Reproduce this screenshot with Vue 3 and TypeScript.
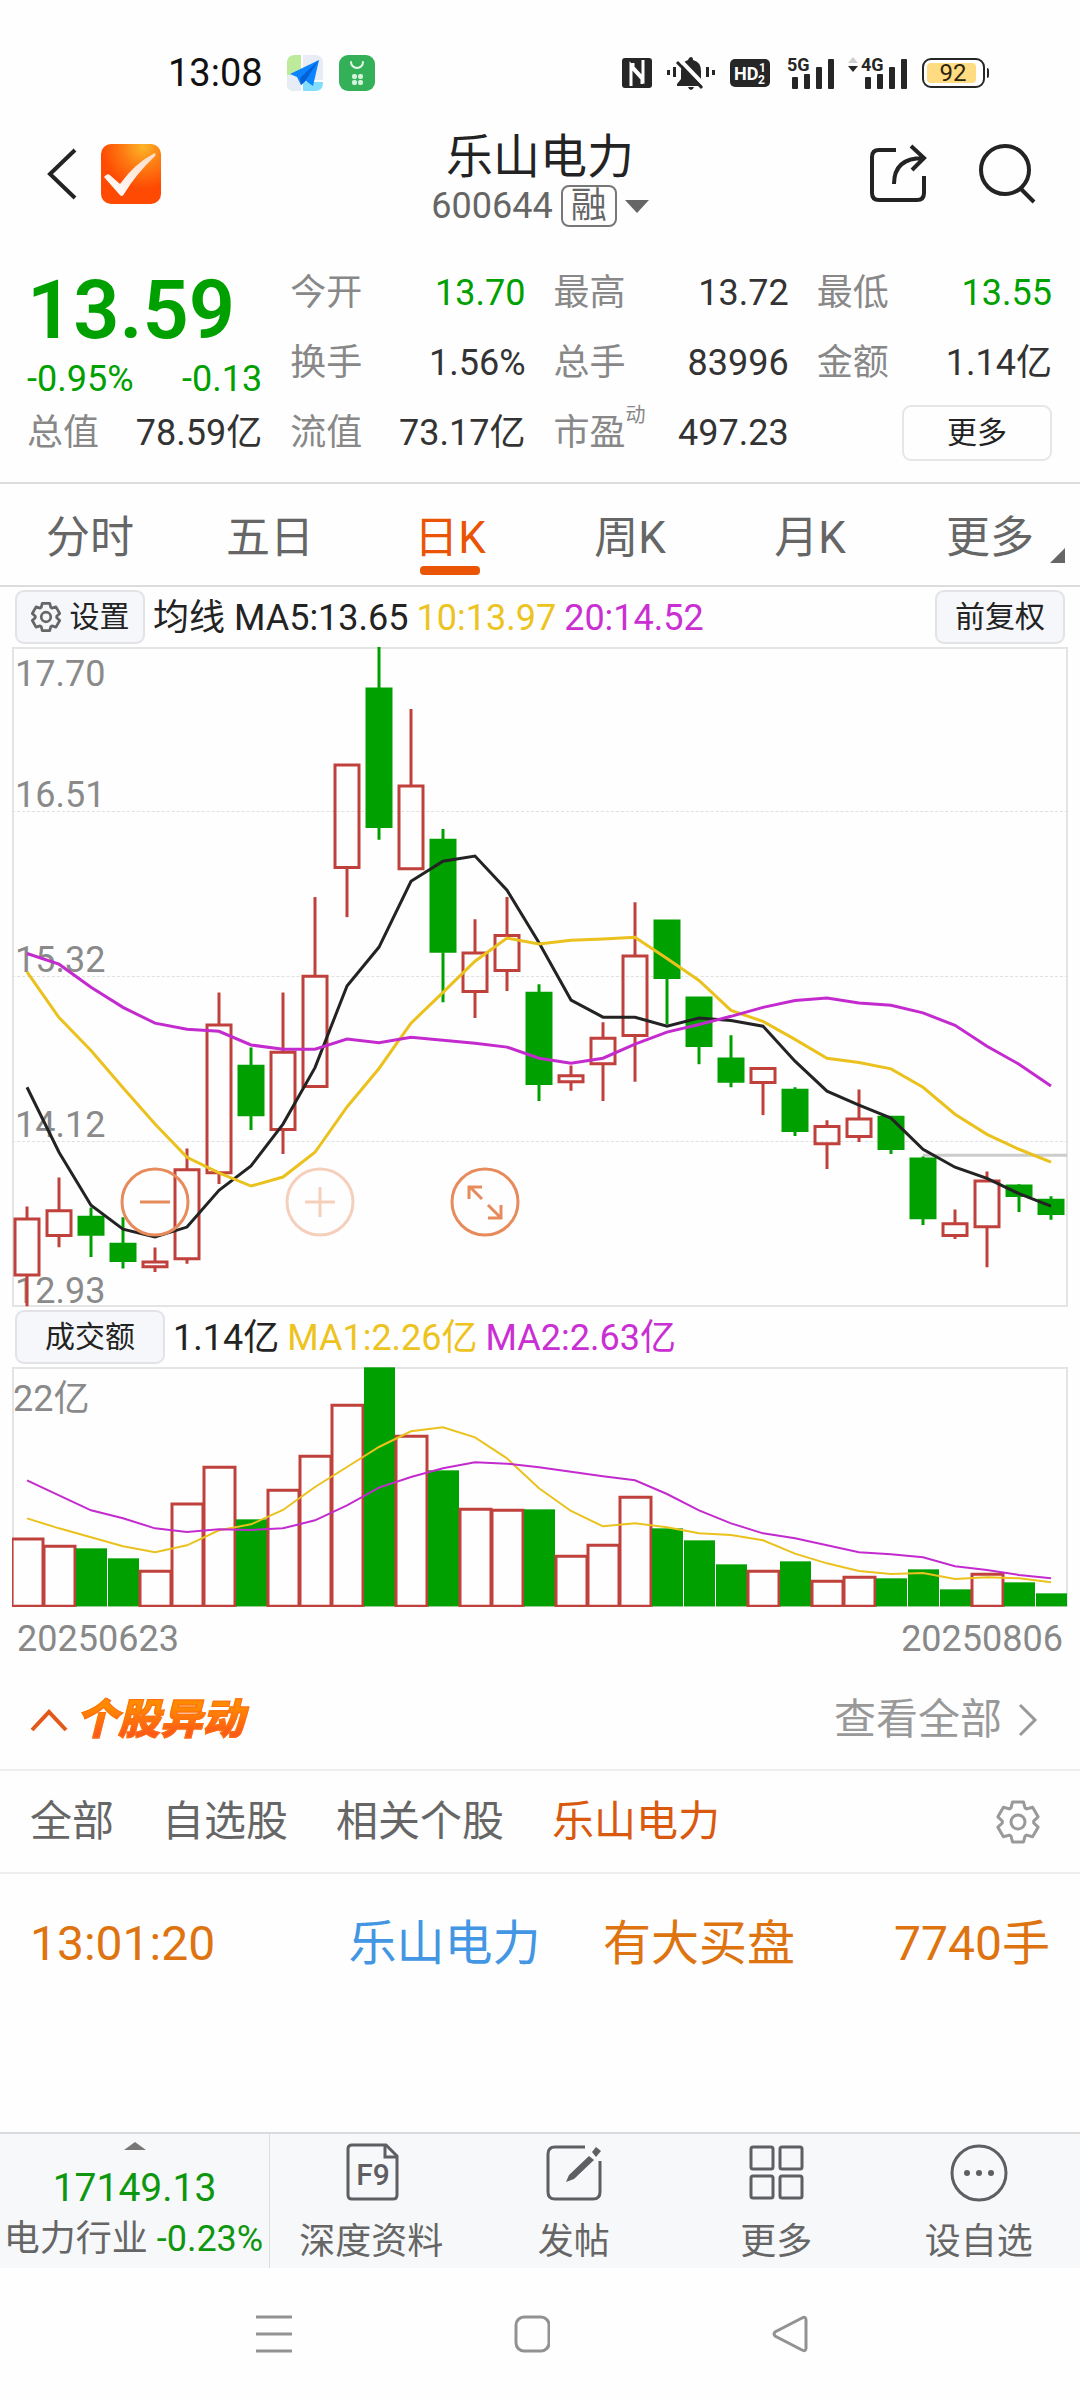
<script setup lang="ts">
import { computed, ref } from 'vue'

interface Quote {
  label: string
  value: string
  down?: boolean
  note?: string
}

type Candle = [high: number, top: number, bottom: number, low: number, up: 0 | 1]

const quotes: Quote[] = [
  { label: '今开', value: '13.70', down: true },
  { label: '最高', value: '13.72' },
  { label: '最低', value: '13.55', down: true },
  { label: '换手', value: '1.56%' },
  { label: '总手', value: '83996' },
  { label: '金额', value: '1.14亿' },
  { label: '总值', value: '78.59亿' },
  { label: '流值', value: '73.17亿' },
  { label: '市盈', value: '497.23', note: '动' },
]

const periods = ['分时', '五日', '日K', '周K', '月K', '更多']
const period = ref('日K')

const feeds = ['全部', '自选股', '相关个股', '乐山电力']
const feed = ref('乐山电力')

const candles: Candle[] = [
  [1325, 1352, 1487, 1558, 1], [1257, 1333, 1395, 1420, 1], [1327, 1348, 1392, 1443, 0],
  [1350, 1411, 1453, 1470, 0], [1421, 1453, 1468, 1478, 1], [1189, 1237, 1449, 1459, 1],
  [824, 898, 1248, 1272, 1], [953, 995, 1112, 1146, 0], [824, 962, 1147, 1202, 1],
  [601, 784, 1046, 1046, 1], [290, 290, 534, 648, 1], [16, 112, 438, 467, 0],
  [161, 339, 537, 537, 1], [442, 466, 730, 847, 0], [653, 730, 824, 884, 1],
  [601, 689, 775, 821, 1], [805, 824, 1039, 1078, 0], [995, 1017, 1035, 1054, 1],
  [894, 929, 993, 1078, 1], [613, 737, 927, 1033, 1], [655, 655, 791, 899, 0],
  [835, 835, 950, 992, 0], [924, 978, 1034, 1046, 0], [1000, 1000, 1037, 1111, 1],
  [1046, 1051, 1149, 1160, 0], [1123, 1136, 1180, 1237, 1], [1051, 1118, 1163, 1174, 1],
  [1114, 1114, 1191, 1202, 0], [1208, 1212, 1353, 1368, 0], [1332, 1363, 1395, 1401, 1],
  [1243, 1263, 1374, 1467, 1], [1273, 1275, 1301, 1338, 0], [1301, 1308, 1343, 1356, 0],
]

const volumeTops = [
  716, 738, 744, 774, 813, 611, 501, 657, 570, 468, 315, 201, 408, 510, 627, 630, 627,
  768, 735, 591, 684, 720, 792, 813, 783, 843, 831, 834, 807, 867, 822, 846, 879,
]
const VOLUME_BASE = 918

const priceLines = [
  { color: '#232323', ys: [1046, 1198, 1322, 1378, 1396, 1373, 1287, 1230, 1132, 1000, 809, 718, 564, 517, 505, 585, 708, 842, 882, 882, 903, 884, 890, 903, 985, 1055, 1088, 1118, 1191, 1233, 1259, 1295, 1324] },
  { color: '#eac11d', ys: [776, 883, 960, 1047, 1132, 1210, 1246, 1277, 1256, 1198, 1092, 1002, 896, 824, 751, 697, 711, 702, 699, 695, 745, 796, 866, 892, 934, 978, 988, 1003, 1046, 1109, 1156, 1191, 1221] },
  { color: '#c32bcf', ys: [733, 758, 812, 859, 896, 910, 915, 947, 957, 957, 933, 942, 929, 936, 943, 952, 978, 990, 978, 945, 917, 899, 880, 859, 843, 837, 849, 854, 872, 901, 950, 992, 1043] },
]
const volumeLines = [
  { color: '#eac11d', ys: [654, 684, 711, 738, 756, 735, 690, 672, 629, 560, 500, 440, 393, 381, 411, 474, 564, 632, 678, 669, 681, 699, 704, 720, 760, 789, 812, 821, 818, 836, 831, 834, 846] },
  { color: '#c32bcf', ys: [540, 585, 630, 654, 684, 695, 687, 689, 684, 660, 615, 562, 530, 504, 486, 490, 501, 514, 528, 540, 581, 630, 669, 699, 714, 735, 756, 762, 771, 798, 809, 824, 834] },
]

const STEP = 32
const center = (i: number) => 15 + STEP * i
const toPoints = (ys: number[]) => ys.map((y, i) => `${center(i)},${y}`).join(' ')

const volumes = computed(() =>
  volumeTops.map((top, i) => ({ top, x: STEP * i, up: candles[i][4] === 1 && i !== 29 })),
)

const gear =
  'M-7-14.1L-5.5-20H5.5L7-14.1 8.7-13.1 14.6-14.8 20.1-5.2 15.7-1V1L20.1 5.2 14.6 14.8 8.7 13.1 7 14.1 5.5 20H-5.5L-7 14.1-8.7 13.1-14.6 14.8-20.1 5.2-15.7 1V-1L-20.1-5.2-14.6-14.8-8.7-13.1Z'
</script>

<template>
  <div class="screen">
    <div class="status">
      <div class="status-side">
        <time class="clock">13:08</time>
        <svg width="36" height="36" viewBox="0 0 36 36" aria-hidden="true">
          <path d="M8 0H14V36H8Q0 36 0 28V8Q0 0 8 0Z" fill="#bdeb9b" />
          <path d="M0 20H14V36H8Q0 36 0 28Z" fill="#e6edf6" />
          <path d="M16 0H28Q36 0 36 8V25H16Z" fill="#e8edf5" />
          <path d="M16 27H36V28Q36 36 28 36H16Z" fill="#83defd" />
          <path d="M32 5L3 19L10 22L14 30L19 26L26 31Z" fill="#0a84ff" />
          <path d="M32 5L13 23L14 30L18 26Z" fill="#0560d6" />
        </svg>
        <svg width="36" height="36" viewBox="0 0 36 36" aria-hidden="true">
          <rect width="36" height="36" rx="9" fill="#34b158" />
          <path d="M12 7a6 6 0 0 0 12 0" fill="none" stroke="#e6f8ea" stroke-width="2" stroke-linecap="round" />
          <g fill="#d4f3db">
            <rect x="13" y="19" width="5" height="5" rx="2" /><rect x="19" y="19" width="5" height="5" rx="2" />
            <rect x="13" y="25" width="5" height="5" rx="2" /><rect x="19" y="25" width="5" height="5" rx="2" />
          </g>
        </svg>
      </div>
      <div class="status-icons">
        <svg width="30" height="30" viewBox="0 0 30 30" aria-hidden="true">
          <rect width="30" height="30" rx="3" fill="#262626" />
          <path d="M9 28V7L20 19V26M11 5V11L21 22V2" fill="none" stroke="#fff" stroke-width="3" />
        </svg>
        <svg width="50" height="34" viewBox="0 0 50 34" aria-hidden="true">
          <g fill="#262626">
            <path d="M25 1Q27 1 27 4Q35 6 35 15V23L38 28V30H11V28L15 23V15Q15 6 22 4Q23 1 25 1ZM22 31H28Q27 34 25 34Q23 34 22 31Z" />
            <rect x="1" y="14" width="3" height="5" /><rect x="7" y="11" width="3" height="10" />
            <rect x="40" y="11" width="3" height="10" /><rect x="46" y="14" width="3" height="5" />
          </g>
          <path d="M14 4L40 31" stroke="#fff" stroke-width="4" /><path d="M11 6L36 32" stroke="#262626" stroke-width="3" />
        </svg>
        <svg width="40" height="28" viewBox="0 0 40 28" aria-hidden="true">
          <rect width="40" height="28" rx="5" fill="#262626" />
          <g fill="#fff" font-family="Roboto, sans-serif" font-weight="700">
            <text x="4" y="21" font-size="18">HD</text>
            <text x="29" y="13" font-size="12">1</text><text x="28" y="25" font-size="12">2</text>
          </g>
        </svg>
        <svg width="50" height="40" viewBox="-3 -3 50 40" aria-hidden="true">
          <g fill="#262626">
            <text x="0" y="15" font-size="18" font-weight="700" font-family="Roboto, sans-serif">5G</text>
            <rect x="5" y="21" width="6" height="12" rx="1" /><rect x="17" y="18" width="6" height="15" rx="1" />
            <rect x="29" y="11" width="6" height="22" rx="1" /><rect x="41" y="3" width="6" height="30" rx="1" />
          </g>
        </svg>
        <svg width="60" height="40" viewBox="0 -3 60 40" aria-hidden="true">
          <path d="M0 7L5 1L10 7Z" fill="#d0d0d0" />
          <g fill="#262626">
            <path d="M0 10H10L5 16Z" />
            <text x="13" y="15" font-size="18" font-weight="700" font-family="Roboto, sans-serif">4G</text>
            <rect x="17" y="21" width="6" height="12" rx="1" /><rect x="29" y="18" width="6" height="15" rx="1" />
            <rect x="41" y="11" width="6" height="22" rx="1" /><rect x="53" y="3" width="6" height="30" rx="1" />
          </g>
        </svg>
        <svg width="68" height="32" viewBox="0 0 68 32" aria-hidden="true">
          <rect x="1" y="2" width="61" height="28" rx="8" fill="#fff" stroke="#262626" stroke-width="2" />
          <rect x="5" y="6" width="49" height="20" rx="4" fill="#ffdb82" />
          <path d="M65 11Q67 11 67 14V19Q67 21 65 21Z" fill="#262626" />
          <text x="31" y="24" text-anchor="middle" font-size="24" font-family="Roboto, sans-serif" fill="#2b2410">92</text>
        </svg>
      </div>
    </div>

    <header class="header">
      <div class="header-side header-back">
        <button type="button" aria-label="返回">
          <svg width="32" height="54" viewBox="0 0 32 54"><path d="M29 3L4 27L29 51" fill="none" stroke="#232323" stroke-width="4" /></svg>
        </button>
        <svg width="62" height="62" viewBox="0 0 62 62" aria-hidden="true">
          <defs>
            <radialGradient id="logo" cx="0.7" cy="0.05" r="0.7">
              <stop offset="0" stop-color="#fdb528" /><stop offset="0.5" stop-color="#fd7a12" /><stop offset="1" stop-color="#fe4a02" />
            </radialGradient>
            <linearGradient id="tick" x1="0" y1="1" x2="0.6" y2="0"><stop offset="0" stop-color="#fff" /><stop offset="1" stop-color="#fbe0cf" /></linearGradient>
          </defs>
          <rect x="1" y="1" width="60" height="60" rx="10" fill="url(#logo)" />
          <path d="M4 34Q8 29 11 33L20 41Q35 20 55 10Q56 11 55 13Q36 31 24 51Q22 55 19 51Z" fill="url(#tick)" />
        </svg>
      </div>
      <button type="button" class="stock">
        <span class="stock-name">乐山电力</span>
        <span class="stock-code">600644<span class="margin-tag">融</span>
          <svg width="24" height="13" viewBox="0 0 24 13" aria-hidden="true"><path d="M0 0H24L12 13Z" fill="#666" /></svg>
        </span>
      </button>
      <div class="header-side header-actions">
        <button type="button" aria-label="分享">
          <svg width="60" height="60" viewBox="0 0 60 60" fill="none" stroke="#232323" stroke-width="4">
            <path d="M28 6H11Q4 6 4 13V49Q4 56 11 56H49Q56 56 56 49V32" />
            <path d="M26 40Q26 14 55 14M43 2L56 14L44 26" />
          </svg>
        </button>
        <button type="button" aria-label="搜索">
          <svg width="60" height="60" viewBox="0 0 60 60" fill="none" stroke="#232323" stroke-width="4">
            <circle cx="27" cy="26" r="24" /><path d="M43 45L56 58" />
          </svg>
        </button>
      </div>
    </header>

    <section class="quote">
      <div class="price">
        <strong class="last">13.59</strong>
        <div class="change"><span>-0.95%</span><span>-0.13</span></div>
      </div>
      <dl v-for="q in quotes" :key="q.label" class="cell">
        <dt>{{ q.label }}<sup v-if="q.note">{{ q.note }}</sup></dt>
        <dd :class="{ down: q.down }">{{ q.value }}</dd>
      </dl>
      <button type="button" class="more">更多</button>
    </section>

    <nav class="periods">
      <button v-for="p in periods" :key="p" type="button" :class="{ active: p === period }" @click="period = p">
        {{ p }}<i v-if="p === '更多'" class="corner"></i>
      </button>
    </nav>

    <div class="toolbar">
      <button type="button" class="chip">
        <svg width="30" height="30" viewBox="-22 -22 44 44" fill="none" stroke="#666" stroke-width="4" stroke-linejoin="round" aria-hidden="true">
          <path :d="gear" /><circle r="7" />
        </svg>设置
      </button>
      <span class="legend">均线 MA5:13.65</span>
      <span class="legend yellow">10:13.97</span>
      <span class="legend purple">20:14.52</span>
      <button type="button" class="chip adjust">前复权</button>
    </div>

    <section class="plot price-plot">
      <div class="axis">
        <div class="split"><span>17.70</span><span>16.51</span></div>
        <div>15.32</div>
        <div>14.12</div>
        <div>12.93</div>
      </div>
      <svg class="series" viewBox="0 16 1056 1544" preserveAspectRatio="none" role="img" aria-label="日K线">
        <path d="M911 1205H1055" stroke="#ccc" />
        <g v-for="(c, i) in candles" :key="i" :class="c[4] ? 'up' : 'fall'">
          <path :d="`M${center(i)} ${c[0]}V${c[1]}M${center(i)} ${c[2]}V${c[3]}`" />
          <rect :x="center(i) - 12" :y="c[1] + 2" width="24" :height="c[2] - c[1] - 4" />
        </g>
        <polyline v-for="l in priceLines" :key="l.color" :points="toPoints(l.ys)" :stroke="l.color" class="line" />
      </svg>
      <div class="zoom">
        <button type="button" aria-label="缩小">
          <svg width="70" height="70" viewBox="0 0 70 70"><circle cx="35" cy="35" r="33" /><path d="M20 35H50" /></svg>
        </button>
        <button type="button" aria-label="放大" class="faded">
          <svg width="70" height="70" viewBox="0 0 70 70"><circle cx="35" cy="35" r="33" /><path d="M20 35H50M35 20V50" /></svg>
        </button>
        <button type="button" aria-label="全屏">
          <svg width="70" height="70" viewBox="0 0 70 70"><circle cx="35" cy="35" r="33" /><path d="M32 32L20 20M19 32V20H32M38 38L50 50M38 51H51V38" /></svg>
        </button>
      </div>
    </section>

    <div class="toolbar">
      <button type="button" class="chip wide">成交额</button>
      <span class="legend">1.14亿</span>
      <span class="legend yellow">MA1:2.26亿</span>
      <span class="legend purple">MA2:2.63亿</span>
    </div>

    <section class="plot volume-plot">
      <div class="volume-max">22亿</div>
      <svg class="series" viewBox="0 200 1056 720" preserveAspectRatio="none" role="img" aria-label="成交额">
        <g v-for="(v, i) in volumes" :key="i" :class="v.up ? 'up' : 'solid'">
          <rect :x="v.x" :y="v.top" width="31" :height="VOLUME_BASE - v.top" />
        </g>
        <polyline v-for="l in volumeLines" :key="l.color" :points="toPoints(l.ys)" :stroke="l.color" class="line thin" />
      </svg>
    </section>
    <div class="dates"><time>20250623</time><time>20250806</time></div>

    <section class="moves">
      <button type="button" class="moves-title">
        <svg width="38" height="24" viewBox="0 0 38 24" aria-hidden="true"><path d="M2 22L19 4L36 22" fill="none" stroke="#e2591a" stroke-width="4" /></svg>
        <span>个股异动</span>
      </button>
      <a href="#all" class="all">查看全部
        <svg width="20" height="34" viewBox="0 0 20 34" aria-hidden="true"><path d="M2 2L17 17L2 32" fill="none" stroke="#999" stroke-width="3" /></svg>
      </a>
    </section>
    <nav class="feeds">
      <button v-for="f in feeds" :key="f" type="button" :class="{ active: f === feed }" @click="feed = f">{{ f }}</button>
      <button type="button" class="feed-settings" aria-label="设置">
        <svg width="44" height="44" viewBox="-22 -22 44 44" fill="none" stroke="#999" stroke-width="3" stroke-linejoin="round">
          <path :d="gear" /><circle r="7" />
        </svg>
      </button>
    </nav>
    <ul class="events">
      <li>
        <time>13:01:20</time>
        <a href="#600644">乐山电力</a>
        <span>有大买盘</span>
        <span class="amount">7740手</span>
      </li>
    </ul>

    <nav class="bottom">
      <button type="button" class="sector">
        <svg width="22" height="8" viewBox="0 0 22 8" aria-hidden="true"><path d="M0 8L11 0L22 8Z" fill="#777" /></svg>
        <span class="sector-index">17149.13</span>
        <span class="sector-name">电力行业 <b>-0.23%</b></span>
      </button>
      <button type="button" class="item">
        <svg width="60" height="60" viewBox="0 0 60 60" fill="none" stroke="#5f5f63" stroke-width="3">
          <path d="M11 3H45L56 14V53Q56 57 52 57H11Q7 57 7 53V7Q7 3 11 3Z" /><path d="M44 3V15H56" />
          <text x="32" y="43" text-anchor="middle" font-size="30" font-weight="500" font-family="Roboto, sans-serif" fill="#5f5f63" stroke="none">F9</text>
        </svg>
        <span>深度资料</span>
      </button>
      <button type="button" class="item">
        <svg width="60" height="60" viewBox="0 0 60 60" fill="none" stroke="#5f5f63" stroke-width="3">
          <path d="M41 5H11Q4 5 4 12V50Q4 57 11 57H49Q56 57 56 50V19" />
          <path d="M45 14L50 18L30 37L22 40L25 33ZM48 10L52 5L57 9L52 15Z" fill="#5f5f63" stroke="none" />
        </svg>
        <span>发帖</span>
      </button>
      <button type="button" class="item">
        <svg width="60" height="60" viewBox="0 0 60 60" fill="none" stroke="#5f5f63" stroke-width="3">
          <rect x="5" y="5" width="22" height="22" rx="2" /><rect x="34" y="5" width="22" height="22" rx="2" />
          <rect x="5" y="34" width="22" height="22" rx="2" /><rect x="34" y="34" width="22" height="22" rx="2" />
        </svg>
        <span>更多</span>
      </button>
      <button type="button" class="item">
        <svg width="60" height="60" viewBox="0 0 60 60" fill="none" stroke="#5f5f63" stroke-width="3">
          <circle cx="30" cy="31" r="27" />
          <g fill="#5f5f63" stroke="none"><circle cx="18" cy="31" r="3" /><circle cx="30" cy="31" r="3" /><circle cx="42" cy="31" r="3" /></g>
        </svg>
        <span>设自选</span>
      </button>
    </nav>

    <div class="system">
      <svg width="36" height="38" viewBox="0 0 36 38" aria-hidden="true"><path d="M0 2H36M0 19H36M0 36H36" stroke="#929292" stroke-width="3" /></svg>
      <svg width="36" height="38" viewBox="0 0 36 38" aria-hidden="true"><rect x="2" y="2" width="33" height="34" rx="8" fill="none" stroke="#929292" stroke-width="3" /></svg>
      <svg width="36" height="38" viewBox="0 0 36 38" aria-hidden="true"><path d="M30 3Q34 1 34 5V33Q34 37 30 35L3 21Q1 19 3 17Z" fill="none" stroke="#929292" stroke-width="3" /></svg>
    </div>
  </div>
</template>

<style>
body {
  background: #fefefe;
}
</style>

<style scoped>
.screen {
  display: flex;
  flex-direction: column;
  min-height: 100vh;
  font-family: Roboto, "Noto Sans CJK SC", sans-serif;
  font-size: 36px;
  line-height: 44px;
  color: #333;
}
button {
  padding: 0;
  border: 0;
  background: none;
  font: inherit;
  color: inherit;
}
a {
  color: inherit;
  text-decoration: none;
}
svg {
  display: block;
  flex: none;
}
dl,
dd,
ul {
  margin: 0;
  padding: 0;
}

.status {
  display: flex;
  justify-content: space-between;
  align-items: center;
  height: 74px;
  padding: 36px 90px 0 168px;
}
.status-side,
.status-icons {
  display: flex;
  align-items: center;
  gap: 16px;
}
.status-icons {
  gap: 14px;
}
.clock {
  margin-right: 8px;
  font-size: 38px;
  color: #111;
}

.header {
  display: grid;
  grid-template-columns: 1fr auto 1fr;
  align-items: center;
  height: 128px;
  padding: 0 42px;
}
.header-side {
  display: flex;
  align-items: center;
  gap: 22px;
}
.header-back {
  padding-left: 4px;
}
.header-actions {
  justify-content: flex-end;
  gap: 50px;
}
.stock {
  display: flex;
  flex-direction: column;
  align-items: center;
  padding-top: 10px;
}
.stock-name {
  font-size: 47px;
  line-height: 54px;
  color: #232323;
}
.stock-code {
  display: flex;
  align-items: center;
  color: #666;
}
.margin-tag {
  margin: 0 8px;
  padding: 0 8px;
  border: 2px solid #777;
  border-radius: 8px;
  line-height: 38px;
}

.quote {
  display: grid;
  grid-template-columns: repeat(4, 1fr);
  grid-auto-rows: 70px;
  column-gap: 28px;
  padding: 20px 28px 14px 27px;
  border-bottom: 2px solid #dcdcdc;
}
.price {
  grid-row: span 2;
  color: #00a000;
}
.last {
  display: block;
  font-size: 81px;
  font-weight: 600;
  line-height: 106px;
}
.change {
  display: flex;
  justify-content: space-between;
  line-height: 30px;
}
.cell {
  display: flex;
  justify-content: space-between;
  align-items: center;
}
dt {
  display: flex;
  color: #888;
}
sup {
  margin-top: -6px;
  font-size: 20px;
  line-height: 20px;
}
.down {
  color: #00a000;
}
.more {
  justify-self: end;
  align-self: center;
  width: 150px;
  height: 56px;
  border: 2px solid #e6e6e6;
  border-radius: 9px;
  font-size: 30px;
  color: #232323;
}

.periods {
  display: grid;
  grid-template-columns: repeat(6, 1fr);
  height: 101px;
  border-bottom: 2px solid #dcdcdc;
}
.periods button {
  position: relative;
  display: flex;
  flex-direction: column;
  align-items: center;
  padding-top: 32px;
  font-size: 44px;
  color: #666;
}
.periods .active {
  color: #e95504;
}
.periods .active::after {
  content: "";
  width: 60px;
  height: 9px;
  margin-top: 6px;
  border-radius: 4px;
  background: #e95504;
}
.corner {
  position: absolute;
  right: 15px;
  bottom: 22px;
  border: solid transparent;
  border-width: 0 0 15px 15px;
  border-bottom-color: #666;
}

.toolbar {
  display: flex;
  align-items: center;
  gap: 8px;
  height: 60px;
  padding: 0 15px;
}
.chip {
  display: flex;
  align-items: center;
  justify-content: center;
  gap: 9px;
  width: 130px;
  height: 54px;
  border: 2px solid #e1e3e6;
  border-radius: 9px;
  background: #f6f7fa;
  font-size: 30px;
  color: #232323;
  white-space: nowrap;
}
.chip.wide {
  width: 150px;
}
.adjust {
  margin-left: auto;
}
.legend {
  padding-top: 2px;
  color: #232323;
}
.yellow {
  color: #edc31f;
}
.purple {
  color: #c92fd3;
}

.plot {
  position: relative;
  margin: 0 12px;
  box-shadow: inset 0 0 0 2px #e4e4e4;
}
.price-plot {
  height: 660px;
}
.volume-plot {
  height: 240px;
}
.axis {
  display: grid;
  grid-template-rows: repeat(4, 1fr);
  height: 100%;
  line-height: 32px;
  color: #8a8a8a;
}
.axis > div {
  display: flex;
  flex-direction: column;
  justify-content: flex-end;
  padding-left: 3px;
}
.axis > div:not(:last-child) {
  border-bottom: 1px dashed #e0e0e0;
}
.axis > .split {
  justify-content: space-between;
  padding-top: 11px;
}
.series {
  position: absolute;
  inset: 0;
  width: 100%;
  height: 100%;
}
.series path,
.series rect,
.line {
  vector-effect: non-scaling-stroke;
  stroke-width: 3px;
}
.up {
  fill: none;
  stroke: #c0403b;
}
.fall {
  fill: #00a000;
  stroke: #00a000;
}
.solid {
  fill: #00a000;
}
.line {
  fill: none;
}
.line.thin {
  stroke-width: 2px;
}
.zoom {
  position: absolute;
  left: 108px;
  bottom: 70px;
  display: flex;
  gap: 95px;
  fill: none;
  stroke: #e88b5c;
  stroke-width: 3px;
}
.faded {
  opacity: 0.4;
}
.volume-max {
  padding: 10px 1px;
  color: #8a8a8a;
}
.dates {
  display: flex;
  justify-content: space-between;
  padding: 10px 17px;
  color: #888;
}

.moves {
  display: flex;
  justify-content: space-between;
  align-items: center;
  height: 98px;
  padding: 0 42px 0 30px;
  border-bottom: 2px solid #eee;
}
.moves-title {
  display: flex;
  align-items: center;
  gap: 8px;
}
.moves-title span {
  padding-right: 8px;
  font-size: 42px;
  font-weight: 900;
  font-style: italic;
  background: linear-gradient(#ff8a00 20%, #fc5a18 80%);
  background-clip: text;
  color: transparent;
  -webkit-text-stroke: 1px #fd7010;
}
.all {
  display: flex;
  align-items: center;
  gap: 16px;
  font-size: 42px;
  color: #999;
}
.feeds {
  display: flex;
  align-items: center;
  gap: 48px;
  height: 101px;
  padding: 0 40px 0 30px;
  border-bottom: 2px solid #eee;
  font-size: 42px;
  color: #666;
}
.feeds .active {
  color: #d9590f;
}
.feed-settings {
  margin-left: auto;
}
.events {
  flex: 1;
  list-style: none;
  font-size: 48px;
  color: #de7410;
}
.events li {
  display: grid;
  grid-template-columns: 318fr 254fr 230fr 216fr;
  align-items: center;
  height: 140px;
  padding: 0 30px;
  white-space: nowrap;
}
.events a {
  color: #4296e3;
}
.amount {
  justify-self: end;
}

.bottom {
  display: grid;
  grid-template-columns: 4fr repeat(4, 3fr);
  height: 134px;
  border-top: 2px solid #d9dbde;
  background: #f7f8fa;
  color: #666;
}
.sector,
.item {
  display: flex;
  flex-direction: column;
  align-items: center;
}
.sector {
  padding-top: 8px;
  border-right: 1px solid #dcdde0;
  white-space: nowrap;
}
.sector-index {
  margin-top: 16px;
  font-size: 39px;
  color: #0f960f;
}
.sector-name {
  margin-top: 7px;
  padding-right: 2px;
}
.sector-name b {
  font-weight: 400;
  color: #0f960f;
}
.item {
  padding-top: 8px;
  gap: 18px;
}
.system {
  display: flex;
  align-items: center;
  justify-content: center;
  gap: 222px;
  height: 132px;
  padding-right: 16px;
}
</style>
